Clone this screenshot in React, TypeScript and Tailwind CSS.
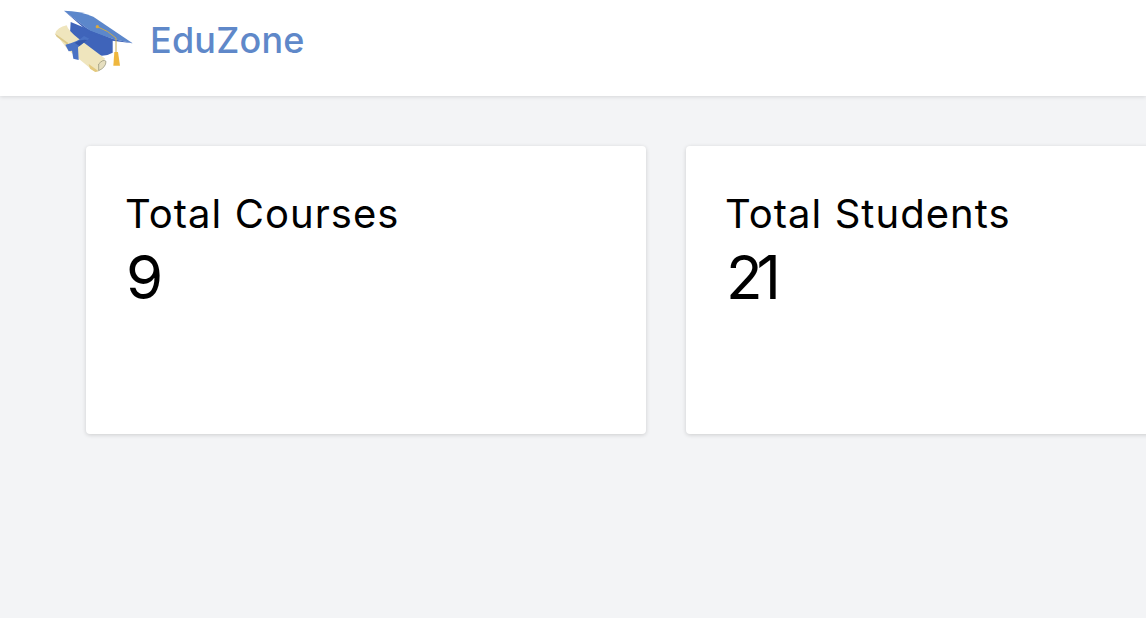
function Logo() {
  return (
    <svg width="110" height="80" viewBox="0 0 330 240" className="absolute left-[40px] top-0">
      <path d="M92 66 L218 118 L218 158 Q195 172 165 164 Q120 135 90 100 Z" fill="#3f64ba" />
      <path d="M46 100 Q52 82 80 76 Q84 92 118 118 L196 176 Q180 190 176 212 L166 216 L150 204 L84 150 Z" fill="#efe5bd" />
      <path d="M44 100 L84 128 L84 136 L50 110 Z" fill="#dcc98a" />
      <path d="M146 192 L176 214 L166 216 L150 206 Z" fill="#e3c97f" />
      <path d="M176 192 Q190 176 198 184 Q198 202 176 212 Z" fill="#e6dfc0" stroke="#8a8a70" strokeWidth="2" />
      <path d="M76 134 Q110 128 132 108 L148 116 Q130 128 114 142 L116 180 L100 176 L96 152 L86 154 Z" fill="#4a72c4" />
      <path d="M104 128 Q124 116 142 120 L118 138 Z" fill="#3558aa" />
      <path d="M72 32 Q120 32 160 50 L278 130 L216 116 Q180 104 150 92 Z" fill="#5c87cb" />
      <path d="M72 32 L150 92 L216 116 L278 130 L216 122 L148 98 Z" fill="#3f64ba" />
      <path d="M172 80 Q205 92 228 114 L228 156" fill="none" stroke="#c9a94f" strokeWidth="3" />
      <circle cx="172" cy="80" r="5" fill="#d9a83f" />
      <path d="M223 156 L234 156 L240 197 L220 197 Z" fill="#efb73e" />
    </svg>
  );
}

function Card({ title, value }: { title: string; value: string }) {
  return (
    <div className="w-[560px] h-[288px] shrink-0 bg-white rounded-[4px] shadow-[0_1px_4px_rgba(0,0,0,0.16)] p-10 text-black">
      <div className="text-[40px] leading-[56px] font-normal tracking-[1.05px] -ml-px">{title}</div>
      <div className="text-[60px] leading-[70px] font-normal tracking-[-6px]">{value}</div>
    </div>
  );
}

export default function App() {
  return (
    <div className="relative w-[1146px] h-[618px] overflow-hidden bg-[#f3f4f6] font-['Inter',sans-serif]">
      <header className="h-24 bg-white shadow-[0_1px_4px_rgba(0,0,0,0.12)] flex items-center pl-[150px] pb-[16px]">
        <Logo />
        <span className="text-[36px] font-[550] tracking-[0.2px] text-[#5f88c9] leading-none">EduZone</span>
      </header>
      <main className="flex gap-10 pl-[86px] pt-[50px]">
        <Card title="Total Courses" value="9" />
        <Card title="Total Students" value="21" />
      </main>
    </div>
  );
}
